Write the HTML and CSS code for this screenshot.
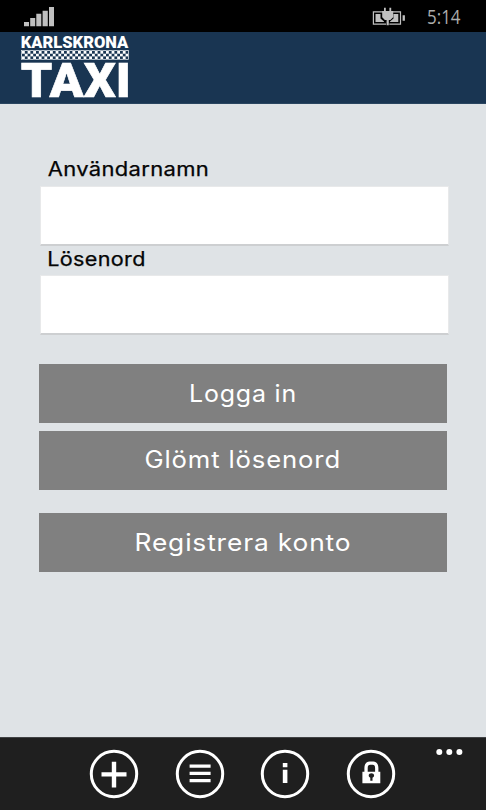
FILE: index.html
```
<!DOCTYPE html>
<html lang="sv">
<head>
<meta charset="utf-8">
<title>Karlskrona Taxi</title>
<link rel="stylesheet" href="styles.css">
</head>
<body>
<div class="phone">
  <div class="status">
    <svg class="signal" width="32" height="32" viewBox="0 0 32 32"><path d="M0 22h5v4.300H0zM6.200 18h5v8.300h-5zM12.300 13.700h5v12.600h-5zM18.600 10.700h5.200v15.600h-5.200zM25 7h5v19.300h-5z"/></svg>
    <svg class="battery" width="34" height="32" viewBox="372 0 34 32">
      <path class="case" d="M383 11.900h-9.600v12.300H386M389.300 24.200h11.200V11.900H392"/>
      <path d="M375.500 14h5v4.500l3.500 3V22h-8.500zM398.300 14h-4.800v4.500l-3.500 3V22h8.300zM402.600 15.300h2.300v5.400h-2.300zM384 7.700h1.800v3.300h3.600V7.700h1.800V11h2v6.200l-2.900 2.800h-1.500v5.300h-2.200v-5.300h-1.700l-2.700-2.800V11h1.800z"/>
    </svg>
    <svg class="time" width="40" height="32"><text x="0" y="24.200" textLength="33.500" lengthAdjust="spacingAndGlyphs">5:14</text></svg>
  </div>
  <header class="header">
    <svg width="110" height="71" viewBox="21 32 110 71">
      <defs><pattern id="check" x="22" y="51" width="5.600" height="5.400" patternUnits="userSpaceOnUse"><path d="M0 0h2.800v2.700H0zM2.800 2.700h2.800v2.700H2.800z" fill="#fff"/></pattern></defs>
      <text class="town" x="20.800" y="48" textLength="107.500" lengthAdjust="spacingAndGlyphs">KARLSKRONA</text>
      <rect x="21.500" y="50.500" width="107" height="8.800" fill="url(#check)" stroke="#dce3e9" stroke-width=".7"/>
      <text class="taxi" x="20.800" y="97.300" textLength="110" lengthAdjust="spacingAndGlyphs">TAXI</text>
    </svg>
  </header>
  <main class="form">
    <label class="label" for="user"><svg width="170" height="30"><text x="-.3" y="20.200" textLength="161.500" lengthAdjust="spacingAndGlyphs">Användarnamn</text></svg></label>
    <input class="field" id="user" type="text">
    <label class="label second" for="pass"><svg width="170" height="29"><text x="-.8" y="19.700" textLength="98.500" lengthAdjust="spacingAndGlyphs">Lösenord</text></svg></label>
    <input class="field" id="pass" type="password">
    <button class="button login"><svg width="408" height="59"><text x="150" y="37.800" textLength="108" lengthAdjust="spacingAndGlyphs">Logga in</text></svg></button>
    <button class="button forgot"><svg width="408" height="59"><text x="105.500" y="37.300" textLength="196.500" lengthAdjust="spacingAndGlyphs">Glömt lösenord</text></svg></button>
    <button class="button register"><svg width="408" height="59"><text x="95.500" y="37.500" textLength="217" lengthAdjust="spacingAndGlyphs">Registrera konto</text></svg></button>
  </main>
  <footer class="appbar">
    <svg class="icon" viewBox="0 0 50 50"><circle cx="25" cy="25" r="22.700"/><path d="M22.800 12.700h4.400v10.500h10.300v4.200H27.200v11h-4.400v-11H12.500v-4.200h10.300z"/></svg>
    <svg class="icon" viewBox="0 0 50 50"><circle cx="25" cy="25" r="22.700"/><path d="M14.600 15.500h21v3.300h-21zM14.600 22.700h21v3.300h-21zM14.600 30h21v3.300h-21z"/></svg>
    <svg class="icon" viewBox="0 0 50 50"><circle cx="25" cy="25" r="22.700"/><path d="M22.800 14h4.600v4.200h-4.600zM22.800 20.700h4.600V34h-4.600z"/></svg>
    <svg class="icon" viewBox="0 0 50 50"><circle cx="25" cy="25" r="22.700"/><path fill-rule="evenodd" d="M16.400 22.700h2V19c0-4 2-6.500 5-6.500h4c3 0 5 2.500 5 6.500v3.700h1.900v11.600H16.400zM21.700 22.700h7.400V19c0-2-.9-3.200-2.400-3.200h-2.600c-1.500 0-2.400 1.200-2.400 3.200zM22.700 26.500c0 1 .6 1.800 1.600 2.200v3h2.200v-3c1-.4 1.600-1.200 1.600-2.200 0-3-5.400-3-5.400 0z"/></svg>
    <svg class="more" width="28" height="8" viewBox="0 0 28 8"><circle cx="3.300" cy="4" r="3"/><circle cx="13.300" cy="4" r="3"/><circle cx="23.400" cy="4" r="3"/></svg>
  </footer>
</div>
</body>
</html>
```
FILE: styles.css
```
* { box-sizing: border-box; }
body { margin: 0; background: #dfe3e6; }
svg { display: block; }
.phone { width: 486px; height: 810px; display: flex; flex-direction: column; overflow: hidden; }
.status { height: 32px; background: #000; display: flex; padding-left: 24px; fill: #c0c0c0; }
.battery { margin-left: 316px; }
.case { fill: none; stroke: #c0c0c0; stroke-width: 1.2; }
.time { margin-left: 21px; font: 400 19.5px "Open Sans", sans-serif; fill: #adadad; }
.header { height: 72px; background: #193552; border-bottom: 1px solid #294560; padding-left: 21px; fill: #fff; }
.header svg { overflow: visible; }
.town { font: 900 16.200px Roboto, sans-serif; }
.taxi { font: 900 48.800px Roboto, sans-serif; stroke: #fff; stroke-width: .6px; }
.form { height: 633px; padding: 52px 38px 0 39px; display: flex; flex-direction: column; align-items: flex-start; }
.label { height: 30px; margin-left: 9px; font: 400 19.500px Inter, sans-serif; letter-spacing: .3px; fill: #050505; stroke: #050505; stroke-width: .25px; }
.second { height: 29px; }
.label svg { overflow: visible; }
.field { width: 409px; height: 60px; margin: 0 0 0 1px; padding: 8px; border: 1px solid #e8e9ea; border-bottom: 2px solid #cdcfd1; background: #fff; border-radius: 0; outline: 0; }
.button { width: 408px; height: 59px; padding: 0; border: 0; background: #808080; fill: #fff; font: 400 24px Inter, sans-serif; letter-spacing: .8px; }
.login { margin-top: 29px; }
.forgot { margin-top: 8px; }
.register { margin-top: 23px; }
.appbar { height: 73px; background: #1f1f1f; border-top: 1px solid #414345; display: flex; align-items: flex-start; padding: 10.500px 0 0 89px; fill: #fff; }
.icon { width: 50px; height: 50px; margin-right: 35.500px; flex: none; }
.icon circle { fill: none; stroke: #fff; stroke-width: 3px; }
.more { margin: -1px 0 0 4.500px; flex: none; }
```
